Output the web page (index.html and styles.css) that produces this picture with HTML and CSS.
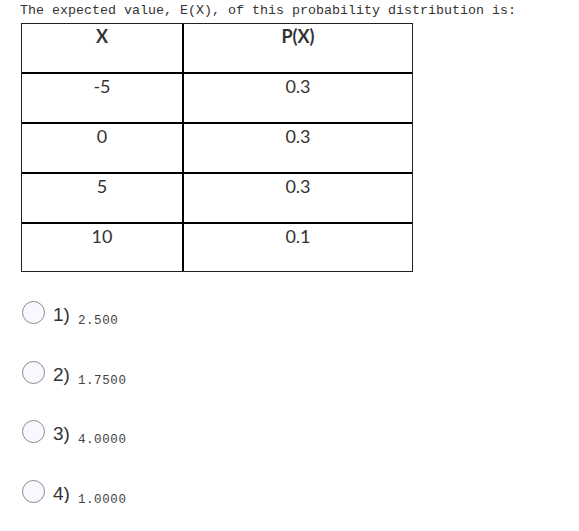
FILE: index.html
```html
<!DOCTYPE html>
<html>
<head>
<meta charset="utf-8">
<link rel="stylesheet" href="styles.css">
</head>
<body>
<div class="page">
  <p class="question">The expected value, E(X), of this probability distribution is:</p>
  <table class="dist">
    <tr class="head"><td class="c1">X</td><td class="c2">P(X)</td></tr>
    <tr><td class="c1">-5</td><td class="c2">0.3</td></tr>
    <tr><td class="c1">0</td><td class="c2">0.3</td></tr>
    <tr><td class="c1">5</td><td class="c2">0.3</td></tr>
    <tr class="last"><td class="c1">10</td><td class="c2">0.1</td></tr>
  </table>
  <div class="options">
    <label class="option"><span class="radio"></span><span class="num">1)</span><span class="ans">2.500</span></label>
    <label class="option"><span class="radio"></span><span class="num">2)</span><span class="ans">1.7500</span></label>
    <label class="option"><span class="radio"></span><span class="num">3)</span><span class="ans">4.0000</span></label>
    <label class="option"><span class="radio"></span><span class="num">4)</span><span class="ans">1.0000</span></label>
  </div>
</div>
</body>
</html>
```
FILE: styles.css
```css
html, body {
  margin: 0;
  padding: 0;
  background: #fff;
}
.page {
  padding-left: 20px;
}
.question {
  margin: 0;
  padding-top: 3px;
  font-family: "Courier New", Courier, "Nimbus Mono PS", "Nimbus Mono L", FreeMono, "Liberation Mono", monospace;
  font-size: 13.33px;
  line-height: 16px;
  color: #333;
  white-space: nowrap;
}
.dist {
  margin: 4px 0 0 1px;
  border: 1px solid #222;
  border-spacing: 0;
  font-family: Lato, sans-serif;
  font-size: 18px;
  color: #333;
}
.dist td {
  height: 50px;
  padding: 2px 0 0 0;
  box-sizing: border-box;
  vertical-align: top;
  text-align: center;
  line-height: 21px;
  border-bottom: 2px solid #000;
}
.dist tr.head td {
  font-weight: 700;
}
.dist tr.last td {
  border-bottom: none;
  height: 47px;
}
.dist td.c1 {
  width: 162px;
  border-right: 2px solid #000;
}
.dist td.c2 {
  width: 228px;
}
.options {
  margin-top: 29px;
  display: flex;
  flex-direction: column;
  gap: 36.6px;
}
.option {
  display: flex;
  align-items: flex-start;
  height: 23px;
}
.radio {
  width: 23px;
  height: 23px;
  box-sizing: border-box;
  border: 1px solid #8a8a8a;
  border-radius: 50%;
  background: #f7f9fe;
  margin-left: 2px;
  flex: none;
}
.num {
  margin-left: 8px;
  margin-top: 3px;
  font-family: "Liberation Sans", Arial, sans-serif;
  font-size: 19px;
  line-height: 22px;
  color: #333;
}
.ans {
  margin-left: 8px;
  margin-top: 12px;
  font-family: "Courier New", Courier, "Nimbus Mono PS", "Nimbus Mono L", FreeMono, "Liberation Mono", monospace;
  font-size: 12.5px;
  letter-spacing: 0.6px;
  line-height: 16px;
  color: #444;
}
```
